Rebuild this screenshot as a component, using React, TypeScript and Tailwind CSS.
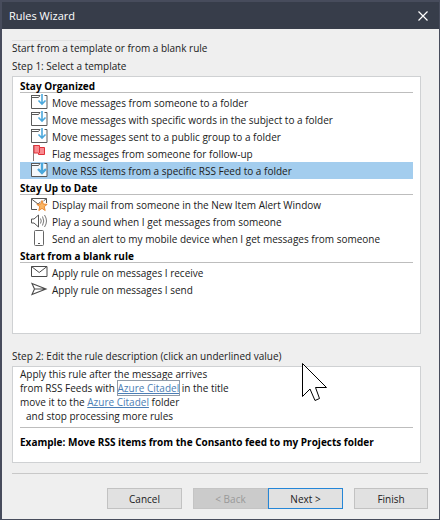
import { useState } from 'react';
import type { ReactNode } from 'react';

type IconName = 'folder' | 'folderFilled' | 'flag' | 'mail' | 'sound' | 'phone' | 'envelope' | 'send';

function FolderIcon({ filled = false }: { filled?: boolean }) {
  return (
    <>
      {filled && <path d="M2 2h15v12H2z" fill="#f4f8fb" />}
      <path d="M1.5 1v13.500h15.500V1.500h-2.500M1.500 3.500h7l1.500-2" fill="none" stroke="#5a5a5a" />
      <path d="M1 1.500h9" fill="none" stroke="#5a5a5a" />
      <path
        d={filled ? 'M12 1v10M8 7l4 4 4-4' : 'M12 0v10M8.500 6.500L12 10l3.500-3.500'}
        fill="none"
        stroke="#4ba8dc"
        strokeWidth={filled ? 2.4 : 1.6}
      />
    </>
  );
}

const drawings: Record<IconName, ReactNode> = {
  folder: <FolderIcon />,
  folderFilled: <FolderIcon filled />,
  flag: (
    <>
      <path d="M3.500 0v16" stroke="#8a7a7a" />
      <path d="M4 .500h5.500V2.500h5v7H8.500V8H4z" fill="#f98b90" stroke="#e0323a" />
      <path d="M9.500 2.500V8" stroke="#e0323a" />
    </>
  ),
  mail: (
    <>
      <path d="M7 13.500H1.500v-11h15V7M1.500 3l6.500 5 2.500-2M13.500 5l3-2.500" fill="none" stroke="#555" />
      <path
        d="M12 4.500l1.300 3.600 3.900.2-3 2.400 1 3.800-3.200-2.100-3.200 2.100 1-3.800-3-2.400 3.900-.2z"
        fill="#fbb563"
        stroke="#e98a35"
      />
    </>
  ),
  sound: (
    <>
      <path d="M1.500 6v4H4l4.500 4V2L4 6z" fill="none" stroke="#555" />
      <path d="M10.500 5.500q1.500 2.500 0 5M12.500 3.500q2.500 4.500 0 9M14.500 2q4 6 0 12" fill="none" stroke="#777" />
    </>
  ),
  phone: (
    <>
      <rect x="4.500" y=".5" width="9" height="15" rx="1" fill="none" stroke="#666" />
      <path d="M8 13.500h2" stroke="#555" />
    </>
  ),
  envelope: <path d="M1.500 2.500h15.500v10h-15.500zM1.500 2.500L9.200 8.500l7.800-6" fill="none" stroke="#4a4a4a" />,
  send: <path d="M2 2.500l14 5.500-14 5.500L4.500 8zM4.500 8H16" fill="none" stroke="#4a4a4a" strokeWidth="1.100" />,
};

const groups: { title: string; items: { icon: IconName; text: string }[] }[] = [
  {
    title: 'Stay Organized',
    items: [
      { icon: 'folder', text: 'Move messages from someone to a folder' },
      { icon: 'folder', text: 'Move messages with specific words in the subject to a folder' },
      { icon: 'folder', text: 'Move messages sent to a public group to a folder' },
      { icon: 'flag', text: 'Flag messages from someone for follow-up' },
      { icon: 'folderFilled', text: 'Move RSS items from a specific RSS Feed to a folder' },
    ],
  },
  {
    title: 'Stay Up to Date',
    items: [
      { icon: 'mail', text: 'Display mail from someone in the New Item Alert Window' },
      { icon: 'sound', text: 'Play a sound when I get messages from someone' },
      { icon: 'phone', text: 'Send an alert to my mobile device when I get messages from someone' },
    ],
  },
  {
    title: 'Start from a blank rule',
    items: [
      { icon: 'envelope', text: 'Apply rule on messages I receive' },
      { icon: 'send', text: 'Apply rule on messages I send' },
    ],
  },
];

function TemplateList() {
  const [selected, setSelected] = useState('Move RSS items from a specific RSS Feed to a folder');
  return (
    <div className="mr-[7px] border border-[#cfd1d3] bg-white px-[7px] pb-[35px]">
      {groups.map((group) => (
        <section key={group.title}>
          <h2 className="mb-px h-4 border-b border-[#bdbdbd] leading-[18px] font-bold text-black">{group.title}</h2>
          <ul>
            {group.items.map((item) => (
              <li key={item.text}>
                <button
                  type="button"
                  aria-pressed={item.text === selected}
                  onClick={() => setSelected(item.text)}
                  className={`flex h-[17px] w-full items-center gap-1 pl-[10px] text-left leading-[18px] whitespace-nowrap ${
                    item.text === selected ? 'bg-[#a3cdee]' : ''
                  }`}
                >
                  <svg viewBox="0 0 18 17" className="h-[17px] w-[18px] shrink-0" aria-hidden="true">
                    {drawings[item.icon]}
                  </svg>
                  {item.text}
                </button>
              </li>
            ))}
          </ul>
        </section>
      ))}
    </div>
  );
}

export default function App() {
  return (
    <main className="relative flex min-h-screen flex-col border-t-2 border-r border-b border-l-2 border-[#474c5c] bg-[#efefef] font-['Open_Sans','Noto_Sans',sans-serif] text-[10px] leading-4 text-[#202020]">
      <header className="flex h-[27px] items-center justify-between bg-[#373d4a] pr-[11px] pl-[7px] text-white">
        <h1 className="text-[11px]">Rules Wizard</h1>
        <button type="button" aria-label="Close">
          <svg viewBox="0 0 10 10" className="size-[10px]" aria-hidden="true">
            <path d="M.5.500l9 9M9.500.500l-9 9" stroke="#fff" strokeWidth="1.200" />
          </svg>
        </button>
      </header>

      <div className="flex flex-col pt-[11px] pr-[11px] pl-[10px]">
        <div className="w-[78px] border-t border-[#e2e2e2]" />
        <p className="h-[18px] leading-[14px]">Start from a template or from a blank rule</p>
        <p className="h-[17px] leading-[14px]">Step 1: Select a template</p>
        <TemplateList />

        <p className="mt-[14px] h-[18px]">Step 2: Edit the rule description (click an underlined value)</p>
        <div className="mr-[7px] border border-[#cfd1d3] bg-white px-[7px] pb-3">
          <div className="pb-1 leading-[14px]">
            <p>Apply this rule after the message arrives</p>
            <p>
              from RSS Feeds with{' '}
              <a href="#title" className="text-[#4a7db5] underline outline outline-[#8f9aa8]">
                Azure Citadel
              </a>{' '}
              in the title
            </p>
            <p>
              move it to the{' '}
              <a href="#folder" className="text-[#4a7db5] underline">
                Azure Citadel
              </a>{' '}
              folder
            </p>
            <p className="pl-1.5">and stop processing more rules</p>
          </div>
          <p className="border-t border-[#bdbdbd] pt-[6px] font-bold text-black">
            Example: Move RSS items from the Consanto feed to my Projects folder
          </p>
        </div>

        <footer className="mt-[10px] flex justify-end border-t border-[#c8c8c8] pt-[14px] pb-2">
          <button type="button" className="mr-[11px] h-[21px] w-[75px] border border-[#c2c2c2] bg-[#e1e1e1]">
            Cancel
          </button>
          <button type="button" disabled className="h-[21px] w-[75px] border border-[#c4c4c4] bg-[#cbcbcb] text-[#999]">
            &lt; Back
          </button>
          <button type="button" className="mr-[11px] h-[21px] w-[75px] border border-[#2586d7] bg-[#e1e1e1]">
            Next &gt;
          </button>
          <button type="button" className="h-[21px] w-[74px] border border-[#c2c2c2] bg-[#e1e1e1]">
            Finish
          </button>
        </footer>
      </div>

      <svg viewBox="0 0 26 39" className="pointer-events-none absolute top-[361px] left-[300px] h-[39px] w-[26px]" aria-hidden="true">
        <path d="M.5.500v33l7.500-7.500 5 11.500 4.500-2-4-11H24.500z" fill="#fff" stroke="#000" />
      </svg>
    </main>
  );
}
